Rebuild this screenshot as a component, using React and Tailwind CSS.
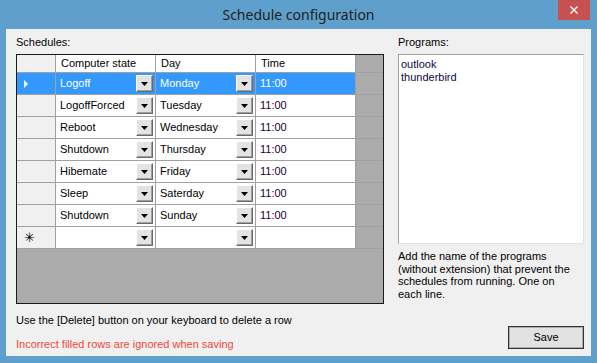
import React from 'react';

const font = { fontFamily: '"Liberation Sans", Arial, sans-serif' };

const rows = [
  { state: 'Logoff', day: 'Monday', time: '11:00', selected: true },
  { state: 'LogoffForced', day: 'Tuesday', time: '11:00' },
  { state: 'Reboot', day: 'Wednesday', time: '11:00' },
  { state: 'Shutdown', day: 'Thursday', time: '11:00' },
  { state: 'Hibemate', day: 'Friday', time: '11:00' },
  { state: 'Sleep', day: 'Saterday', time: '11:00' },
  { state: 'Shutdown', day: 'Sunday', time: '11:00' },
];

const DropButton = () => (
  <div className="mr-[1px] flex h-[17px] w-[17px] shrink-0 items-center justify-center border-t border-l border-t-white border-l-white border-r border-b border-r-[#696969] border-b-[#696969] bg-[#e3e3e3] shadow-[inset_-1px_-1px_0_#a0a0a0]">
    <svg width="7" height="4" viewBox="0 0 7 4">
      <path d="M0 0h7L3.5 4z" fill="#000" />
    </svg>
  </div>
);

const ComboCell = ({ value, selected }) => (
  <div className={`flex h-full w-[100px] items-center justify-between border-r border-[#a0a0a0] pl-[4px] pr-[1px] ${selected ? 'bg-[#3399ff] text-white' : 'bg-white text-black'}`}>
    <span>{value}</span>
    <DropButton />
  </div>
);

const GridRow = ({ row, isNew }) => (
  <div className="flex h-[22px] border-b border-[#a0a0a0]">
    <div className={`flex w-[39px] items-center border-r border-[#a0a0a0] pl-[7px] ${row?.selected ? 'bg-[#3399ff]' : 'bg-[#f0f0f0]'}`}>
      {row?.selected && (
        <svg width="4" height="8" viewBox="0 0 4 8">
          <path d="M0 0l4 4-4 4z" fill="#fff" />
        </svg>
      )}
      {isNew && <span className="text-[13px] leading-none">✳</span>}
    </div>
    <ComboCell value={row?.state ?? ''} selected={row?.selected} />
    <ComboCell value={row?.day ?? ''} selected={row?.selected} />
    <div className={`flex w-[100px] items-center border-r border-[#a0a0a0] pl-[4px] ${row?.selected ? 'bg-[#3399ff] text-white' : 'bg-white text-[#1a0033]'}`}>
      {row?.time ?? ''}
    </div>
  </div>
);

export default function App() {
  return (
    <div className="flex h-[363px] w-[597px] flex-col bg-[#5f9fcb] text-[11px] text-black" style={font}>
      {/* Title bar */}
      <div className="relative flex h-[29px] shrink-0 items-center justify-center">
        <span className="text-[14px] text-[#222]" style={{ fontFamily: '"Noto Sans", "Open Sans", sans-serif' }}>
          Schedule configuration
        </span>
        <div className="absolute right-[7px] top-0 flex h-[20px] w-[32px] items-center justify-center bg-[#c75050]">
          <svg width="8" height="8" viewBox="0 0 8 8">
            <path d="M0.5 0.5l7 7M7.5 0.5l-7 7" stroke="#fff" strokeWidth="1.4" />
          </svg>
        </div>
      </div>

      {/* Client area */}
      <div className="mx-[6px] mb-[7px] flex flex-1 bg-[#f0f0f0]">
        {/* Left: schedules */}
        <div className="ml-[10px] flex w-[368px] flex-col">
          <div className="mt-[7px] h-[13px] leading-[13px]">Schedules:</div>
          <div className="mt-[5px] h-[250px] border border-[#1a1a1a] bg-[#ababab]">
            <div className="flex h-[18px] border-b border-[#a0a0a0]">
              <div className="w-[39px] border-r border-[#a0a0a0] bg-[#f0f0f0]" />
              <div className="flex w-[100px] items-center border-r border-[#a0a0a0] bg-white pl-[5px]">Computer state</div>
              <div className="flex w-[100px] items-center border-r border-[#a0a0a0] bg-white pl-[5px]">Day</div>
              <div className="flex w-[100px] items-center border-r border-[#a0a0a0] bg-white pl-[5px]">Time</div>
            </div>
            {rows.map((r, i) => (
              <GridRow key={i} row={r} />
            ))}
            <GridRow isNew />
          </div>
          <div className="mt-[10px] h-[13px] leading-[13px]">Use the [Delete] button on your keyboard to delete a row</div>
          <div className="mt-[11px] h-[13px] leading-[13px] text-[#f2473a]">Incorrect filled rows are ignored when saving</div>
        </div>

        {/* Right: programs */}
        <div className="ml-[14px] flex w-[186px] flex-col">
          <div className="mt-[7px] h-[13px] leading-[13px]">Programs:</div>
          <div className="mt-[5px] h-[190px] border border-t-[#a0a0a0] border-l-[#a0a0a0] border-r-[#e3e3e3] border-b-[#e3e3e3] bg-white px-[2px] pt-[3px] text-[#0a0a40] leading-[13px]">
            <div>outlook</div>
            <div>thunderbird</div>
          </div>
          <div className="mt-[6px] w-[176px] leading-[12.5px]">
            Add the name of the programs (without extension) that prevent the schedules from running. One on each line.
          </div>
          <div className="mt-auto mb-[7px] flex justify-end">
            <button className="h-[23px] w-[76px] border border-[#333] bg-[#e1e1e1] shadow-[inset_0_0_0_1px_#adadad] text-[11px]" style={font}>
              Save
            </button>
          </div>
        </div>
      </div>
    </div>
  );
}
